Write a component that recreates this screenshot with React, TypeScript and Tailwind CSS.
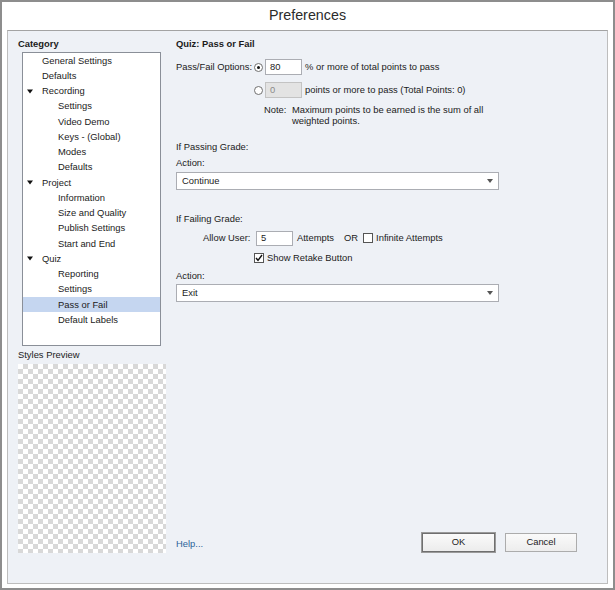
import React from "react";

type Node = { t: string; l: 1 | 2; open?: boolean; sel?: boolean };

const tree: Node[] = [
  { t: "General Settings", l: 1 },
  { t: "Defaults", l: 1 },
  { t: "Recording", l: 1, open: true },
  { t: "Settings", l: 2 },
  { t: "Video Demo", l: 2 },
  { t: "Keys - (Global)", l: 2 },
  { t: "Modes", l: 2 },
  { t: "Defaults", l: 2 },
  { t: "Project", l: 1, open: true },
  { t: "Information", l: 2 },
  { t: "Size and Quality", l: 2 },
  { t: "Publish Settings", l: 2 },
  { t: "Start and End", l: 2 },
  { t: "Quiz", l: 1, open: true },
  { t: "Reporting", l: 2 },
  { t: "Settings", l: 2 },
  { t: "Pass or Fail", l: 2, sel: true },
  { t: "Default Labels", l: 2 },
];

function Tri() {
  return (
    <svg width="6" height="5" viewBox="0 0 6 5">
      <path d="M0 0.5 L6 0.5 L3 4.5 Z" fill="#111" />
    </svg>
  );
}

function Radio({ on }: { on?: boolean }) {
  return (
    <span className="flex h-[9px] w-[9px] shrink-0 items-center justify-center rounded-full border border-[#707070] bg-white">
      {on && <span className="h-[3px] w-[3px] rounded-full bg-[#111]" />}
    </span>
  );
}

function Check({ on }: { on?: boolean }) {
  return (
    <span className="flex h-[10px] w-[10px] shrink-0 items-center justify-center border border-[#555] bg-white">
      {on && (
        <svg width="8" height="8" viewBox="0 0 8 8">
          <path d="M1 4 L3 6.3 L7 1" fill="none" stroke="#111" strokeWidth="1.4" />
        </svg>
      )}
    </span>
  );
}

function Select({ value }: { value: string }) {
  return (
    <div className="flex h-[18px] w-[323px] items-center justify-between border border-[#abadb3] bg-white pl-[5px] pr-[5px]">
      <span>{value}</span>
      <svg width="6" height="4" viewBox="0 0 6 4">
        <path d="M0 0 L6 0 L3 4 Z" fill="#555" />
      </svg>
    </div>
  );
}

export default function App() {
  return (
    <div className="flex h-[590px] w-[615px] flex-col border-2 border-[#8d8d8d] bg-white font-['Liberation_Sans',Arial,sans-serif] text-[9.4px] text-[#1b1b1b]">
      <div className="flex h-[28px] items-center justify-center text-[14.3px] text-[#2b2b2b]">
        Preferences
      </div>

      <div className="mx-[5px] mb-[4px] flex flex-1 border border-[#bdbdbd] border-t-[#a3a3a3] bg-[#eef1f6]">
        {/* left column */}
        <div className="flex w-[158px] flex-col pb-[30px] pl-[10px] pt-[6px]">
          <div className="flex h-[14px] items-center font-bold">Category</div>
          <div className="ml-[4px] mt-[1px] h-[294px] w-[139px] border border-[#8a8f98] bg-white">
            {tree.map((n, i) => (
              <div
                key={i}
                className={`flex h-[15.25px] items-center ${n.sel ? "bg-[#c5d6f0]" : ""}`}
              >
                {n.l === 1 ? (
                  <span className="flex w-[19px] shrink-0 pl-[4px]">{n.open && <Tri />}</span>
                ) : (
                  <span className="w-[35px] shrink-0" />
                )}
                <span>{n.t}</span>
              </div>
            ))}
          </div>
          <div className="mt-[2px] flex h-[14px] items-center">Styles Preview</div>
          <div className="mt-[2px] w-[148px] flex-1 bg-[image:conic-gradient(#d8d8d8_25%,#ffffff_0_50%,#d8d8d8_0_75%,#ffffff_0)] bg-[length:10px_10px]" />
        </div>

        {/* right column */}
        <div className="ml-[10px] flex flex-1 flex-col pb-[31px] pr-[30px] pt-[6px]">
          <div className="flex h-[14px] items-center font-bold">Quiz: Pass or Fail</div>

          <div className="mt-[8px] flex h-[16px] items-center">
            <span className="w-[78px] shrink-0">Pass/Fail Options:</span>
            <Radio on />
            <span className="ml-[2px] flex h-[16px] w-[37px] items-center border border-[#abadb3] bg-white pl-[4px]">
              80
            </span>
            <span className="ml-[3px]">% or more of total points to pass</span>
          </div>

          <div className="mt-[7px] flex h-[16px] items-center pl-[78px]">
            <Radio />
            <span className="ml-[2px] flex h-[16px] w-[37px] items-center border border-[#c3c3c3] bg-[#e3e3e3] pl-[4px] text-[#8a8a8a]">
              0
            </span>
            <span className="ml-[3px]">points or more to pass (Total Points: 0)</span>
          </div>

          <div className="mt-[6px] flex pl-[88px] leading-[11px]">
            <span className="w-[28px] shrink-0">Note:</span>
            <span>
              Maximum points to be earned is the sum of all
              <br />
              weighted points.
            </span>
          </div>

          <div className="mt-[14px] flex h-[14px] items-center">If Passing Grade:</div>
          <div className="mt-[2px] flex h-[14px] items-center">Action:</div>
          <div className="mt-[2px]">
            <Select value="Continue" />
          </div>

          <div className="mt-[22px] flex h-[14px] items-center">If Failing Grade:</div>
          <div className="mt-[4px] flex h-[16px] items-center pl-[27px]">
            <span className="w-[53px] shrink-0">Allow User:</span>
            <span className="flex h-[15px] w-[37px] items-center border border-[#abadb3] bg-white pl-[4px]">
              5
            </span>
            <span className="ml-[4px]">Attempts</span>
            <span className="ml-[10px]">OR</span>
            <span className="ml-[5px]">
              <Check />
            </span>
            <span className="ml-[3px]">Infinite Attempts</span>
          </div>
          <div className="mt-[5px] flex h-[14px] items-center pl-[78px]">
            <Check on />
            <span className="ml-[3px]">Show Retake Button</span>
          </div>

          <div className="mt-[4px] flex h-[14px] items-center">Action:</div>
          <div className="mt-[1px]">
            <Select value="Exit" />
          </div>

          <div className="flex-1" />

          <div className="flex h-[19px] items-center">
            <span className="mt-[3px] text-[#2c6399]">Help...</span>
            <div className="flex-1" />
            <button className="flex h-[19px] w-[73px] items-center justify-center border border-[#6f6f6f] bg-gradient-to-b from-[#fafafa] to-[#ececec] outline outline-1 outline-[#9a9a9a]">
              OK
            </button>
            <button className="ml-[10px] flex h-[19px] w-[72px] items-center justify-center border border-[#acacac] bg-gradient-to-b from-[#fafafa] to-[#ededed]">
              Cancel
            </button>
          </div>
        </div>
      </div>
    </div>
  );
}
